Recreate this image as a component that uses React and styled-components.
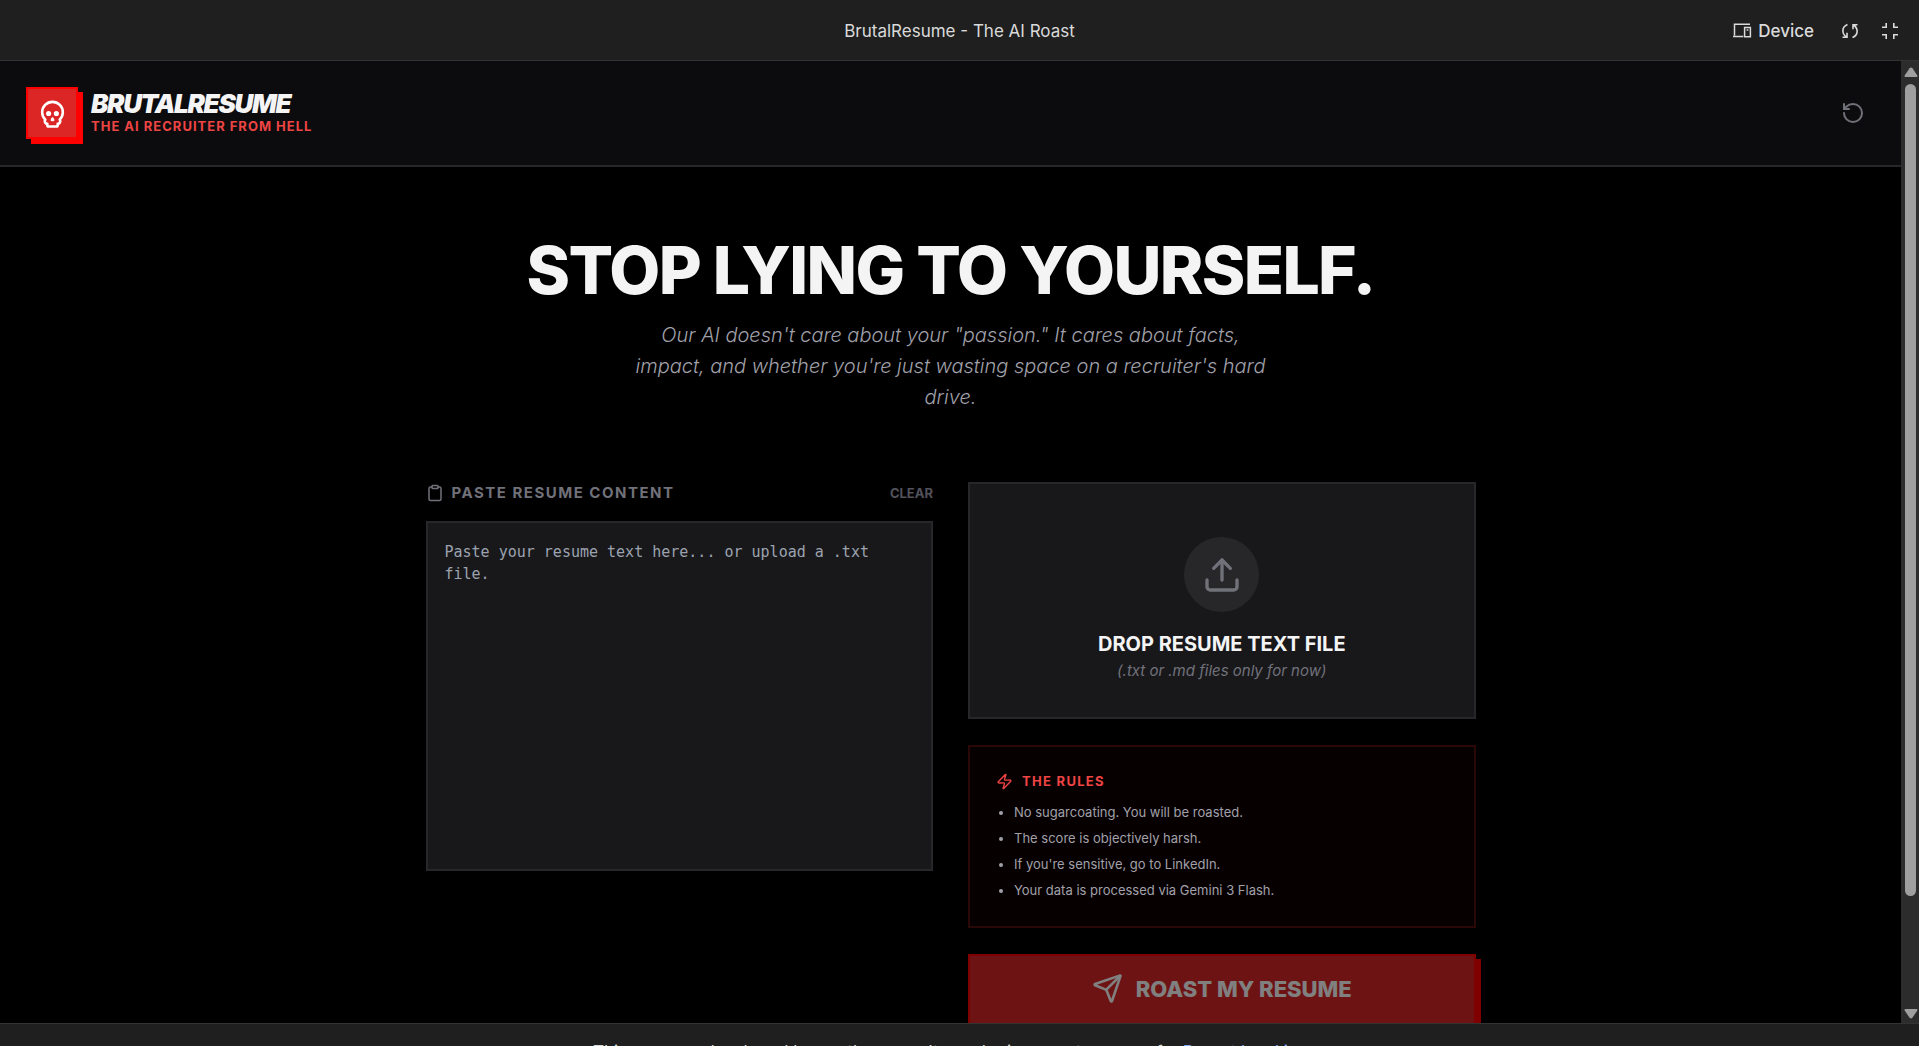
import React, { useState } from "react";
import styled, { createGlobalStyle } from "styled-components";
import { Clipboard, RotateCcw, Send, Skull, Upload, Zap } from "lucide-react";

const RULES = [
  "No sugarcoating. You will be roasted.",
  "The score is objectively harsh.",
  "If you're sensitive, go to LinkedIn.",
  "Your data is processed via Gemini 3 Flash.",
];

const DeviceIcon = () => (
  <svg width="20" height="20" viewBox="0 0 20 20" fill="none" stroke="currentColor" strokeWidth="1.5">
    <path d="M18 3.2H2.5V14.5M1 15.6H11.2M12.6 6.6H18.4V15.8H12.6ZM14.6 9H16.4" />
  </svg>
);

const SyncIcon = () => (
  <svg width="20" height="20" viewBox="0 0 20 20" fill="none" stroke="currentColor" strokeWidth="1.6">
    <path d="M7.5 3.5C1.5 6 1.5 12.5 6.5 16M2.5 16.2H7V11.8M12.5 16.5C18.5 14 18.5 7.5 13.5 4M17.5 3.8H13V8.2" />
  </svg>
);

const CollapseIcon = () => (
  <svg width="20" height="20" viewBox="0 0 20 20" fill="none" stroke="currentColor" strokeWidth="1.6">
    <path d="M2 6.2H6.2V2M13.8 2V6.2H18M2 13.8H6.2V18M18 13.8H13.8V18" />
  </svg>
);

const ScrollArrow = ({ down }) => (
  <svg width="14" height="10" viewBox="0 0 14 10" fill="#9f9f9f">
    {down ? (
      <path d="M1.5 0H12.5Q14 .3 13.2 1.7L8.4 8.8Q7 10.4 5.6 8.8L.8 1.7Q0 .3 1.5 0Z" />
    ) : (
      <path d="M1.5 10H12.5Q14 9.7 13.2 8.3L8.4 1.2Q7-.4 5.6 1.2L.8 8.3Q0 9.7 1.5 10Z" />
    )}
  </svg>
);

const App = () => {
  const [resume, setResume] = useState("");

  const handleFile = async (event) => {
    const file = event.target.files[0];
    if (file) {
      setResume(await file.text());
    }
  };

  return (
    <Shell>
      <GlobalStyle />
      <TopBar>
        <AppTitle>BrutalResume - The AI Roast</AppTitle>
        <TopActions>
          <DeviceButton type="button">
            <DeviceIcon />
            Device
          </DeviceButton>
          <IconButton type="button" aria-label="Reload">
            <SyncIcon />
          </IconButton>
          <IconButton type="button" aria-label="Exit full screen">
            <CollapseIcon />
          </IconButton>
        </TopActions>
      </TopBar>

      <Preview>
        <Page>
          <Header>
            <Brand>
              <Logo>
                <Skull size={31} />
              </Logo>
              <div>
                <BrandName>BRUTALRESUME</BrandName>
                <Tagline>THE AI RECRUITER FROM HELL</Tagline>
              </div>
            </Brand>
            <ResetButton type="button" aria-label="Start over" onClick={() => setResume("")}>
              <RotateCcw size={24} />
            </ResetButton>
          </Header>

          <Main>
            <Hero>
              <Headline>STOP LYING TO YOURSELF.</Headline>
              <Lead>
                Our AI doesn't care about your "passion." It cares about facts,
                impact, and whether you're just wasting space on a recruiter's
                hard drive.
              </Lead>
            </Hero>
            <Columns>
              <PasteColumn>
                <PasteHead>
                  <PasteLabel htmlFor="resume">
                    <Clipboard size={18} />
                    PASTE RESUME CONTENT
                  </PasteLabel>
                  <ClearButton type="button" onClick={() => setResume("")}>
                    CLEAR
                  </ClearButton>
                </PasteHead>
                <ResumeInput
                  id="resume"
                  value={resume}
                  onChange={(e) => setResume(e.target.value)}
                  placeholder="Paste your resume text here... or upload a .txt file."
                />
              </PasteColumn>
              <SideColumn>
                <DropZone>
                  <HiddenFile type="file" accept=".txt,.md" onChange={handleFile} />
                  <UploadCircle>
                    <Upload size={40} />
                  </UploadCircle>
                  <DropTitle>DROP RESUME TEXT FILE</DropTitle>
                  <DropHint>(.txt or .md files only for now)</DropHint>
                </DropZone>
                <Rules>
                  <RulesTitle>
                    <Zap size={17} />
                    THE RULES
                  </RulesTitle>
                  <RuleList>
                    {RULES.map((rule) => (
                      <li key={rule}>{rule}</li>
                    ))}
                  </RuleList>
                </Rules>
                <RoastButton type="button" disabled={!resume}>
                  <Send size={31} />
                  ROAST MY RESUME
                </RoastButton>
              </SideColumn>
            </Columns>
          </Main>
        </Page>
        <ScrollTrack>
          <ScrollArrow />
          <ScrollLane>
            <ScrollThumb />
          </ScrollLane>
          <ScrollArrow down />
        </ScrollTrack>
      </Preview>

      <Footer>
        <span>This app was developed by another user. It may be inaccurate or unsafe.</span>
        <FooterLink href="#report">Report legal issue</FooterLink>
      </Footer>
    </Shell>
  );
};

const GlobalStyle = createGlobalStyle`
  * {
    box-sizing: border-box;
  }
  body {
    margin: 0;
    overflow: hidden;
    background: #000;
    color: #f4f4f5;
    font-family: Inter, "Liberation Sans", sans-serif;
  }
  h1, h2, h3, p, ul {
    margin: 0;
  }
  button {
    padding: 0;
    border: 0;
    background: none;
    color: inherit;
    font-family: inherit;
    cursor: pointer;
  }
  svg {
    display: block;
    flex: none;
  }
`;

const Shell = styled.div`
  display: flex;
  flex-direction: column;
  height: 100vh;
`;

const TopBar = styled.div`
  display: grid;
  grid-template-columns: 1fr auto 1fr;
  align-items: center;
  flex: none;
  height: 61px;
  padding: 1px 19px 0;
  border-bottom: 1px solid #333;
  background: #1f1f1f;
  color: #dadada;
`;

const AppTitle = styled.div`
  grid-column: 2;
  font-size: 17px;
  line-height: 24px;
`;

const TopActions = styled.div`
  display: flex;
  align-items: center;
  justify-content: flex-end;
  gap: 20px;
`;

const DeviceButton = styled.button`
  display: flex;
  align-items: center;
  gap: 6px;
  margin-right: 6px;
  font-size: 17px;
  font-weight: 500;
  line-height: 24px;
`;

const IconButton = styled.button`
  display: flex;
`;

const Preview = styled.div`
  display: flex;
  flex: 1;
  min-height: 0;
`;

const Page = styled.div`
  flex: 1;
  min-width: 0;
  overflow: hidden;
  background: #000;
`;

const Header = styled.header`
  display: flex;
  align-items: center;
  justify-content: space-between;
  padding: 26px 36px 26px 26px;
  border-bottom: 2px solid #27272a;
  background: #0c0c0e;
`;

const Brand = styled.div`
  display: flex;
  align-items: center;
  gap: 13px;
`;

const Logo = styled.div`
  display: flex;
  align-items: center;
  justify-content: center;
  width: 52px;
  height: 52px;
  border: 2px solid #f00;
  background: #dc2626;
  box-shadow: 5px 5px 0 #f00;
  color: #fff;
`;

const BrandName = styled.h1`
  font-size: 26px;
  font-style: italic;
  font-weight: 900;
  letter-spacing: -0.05em;
  line-height: 26px;
`;

const Tagline = styled.p`
  color: #ef4444;
  font-size: 13px;
  font-weight: 700;
  letter-spacing: 1px;
  line-height: 18px;
`;

const ResetButton = styled.button`
  display: flex;
  color: #71717a;
`;

const Main = styled.main`
  max-width: 1050px;
  margin: 0 auto;
  padding-top: 70px;
`;

const Hero = styled.section`
  display: flex;
  flex-direction: column;
  align-items: center;
  gap: 17px;
  margin-bottom: 69px;
  text-align: center;
`;

const Headline = styled.h2`
  font-size: 66px;
  font-weight: 800;
  letter-spacing: -0.025em;
  line-height: 66px;
`;

const Lead = styled.p`
  max-width: 634px;
  color: #a1a1aa;
  font-size: 20px;
  font-style: oblique 10deg;
  font-weight: 300;
  line-height: 31px;
`;

const Columns = styled.div`
  display: grid;
  grid-template-columns: 1fr 1fr;
  gap: 35px;
`;

const PasteColumn = styled.section`
  display: flex;
  flex-direction: column;
  gap: 18px;
`;

const PasteHead = styled.div`
  display: flex;
  align-items: center;
  justify-content: space-between;
  height: 21px;
`;

const PasteLabel = styled.label`
  display: flex;
  align-items: center;
  gap: 8px;
  color: #71717a;
  font-size: 15px;
  font-weight: 700;
  letter-spacing: 0.1em;
`;

const ClearButton = styled.button`
  color: #52525b;
  font-size: 13px;
  font-weight: 700;
`;

const ResumeInput = styled.textarea`
  display: block;
  width: 100%;
  height: 350px;
  padding: 18px 17px;
  border: 2px solid #27272a;
  outline: none;
  background: #18181b;
  color: #f4f4f5;
  font-family: "DejaVu Sans Mono", "Liberation Mono", monospace;
  font-size: 15px;
  line-height: 22px;
  resize: none;

  &::placeholder {
    color: #9ca3af;
  }
`;

const SideColumn = styled.section`
  display: flex;
  flex-direction: column;
  gap: 26px;
`;

const DropZone = styled.label`
  display: flex;
  flex-direction: column;
  align-items: center;
  padding: 53px 35px 35px;
  border: 2px solid #27272a;
  background: #18181b;
  cursor: pointer;
`;

const HiddenFile = styled.input`
  display: none;
`;

const UploadCircle = styled.span`
  display: flex;
  align-items: center;
  justify-content: center;
  width: 75px;
  height: 75px;
  margin-bottom: 17px;
  border-radius: 50%;
  background: #27272a;
  color: #71717a;
`;

const DropTitle = styled.span`
  font-size: 20px;
  font-weight: 700;
  line-height: 31px;
`;

const DropHint = styled.span`
  color: #71717a;
  font-size: 15px;
  font-style: italic;
  line-height: 22px;
`;

const Rules = styled.section`
  padding: 25px 26px 27px;
  border: 2px solid #2b0808;
  background: #070000;
`;

const RulesTitle = styled.h3`
  display: flex;
  align-items: center;
  gap: 9px;
  margin-bottom: 13px;
  color: #ef4444;
  font-size: 13px;
  font-weight: 700;
  letter-spacing: 0.1em;
  line-height: 18px;
`;

const RuleList = styled.ul`
  display: grid;
  gap: 8px;
  padding-left: 18px;
  color: #a1a1aa;
  font-size: 13px;
  line-height: 18px;
`;

const RoastButton = styled.button`
  display: flex;
  align-items: center;
  justify-content: center;
  gap: 13px;
  padding: 17px 18px 19px;
  border: 2px solid #f00;
  background: #dc2626;
  box-shadow: 5px 5px 0 #f00;
  color: #fff;
  font-size: 22px;
  font-weight: 800;
  line-height: 30px;

  &:disabled {
    opacity: 0.5;
    cursor: not-allowed;
  }
`;

const ScrollTrack = styled.div`
  display: flex;
  flex-direction: column;
  align-items: center;
  flex: none;
  gap: 7px;
  width: 18px;
  padding: 6px 0 4px 1px;
  background: #2c2c2c;
`;

const ScrollLane = styled.div`
  flex: 1;
  width: 11px;
`;

const ScrollThumb = styled.div`
  height: 88.4%;
  border-radius: 6px;
  background: #9f9f9f;
`;

const Footer = styled.footer`
  display: flex;
  justify-content: center;
  flex: none;
  gap: 6px;
  height: 23px;
  padding-top: 16px;
  border-top: 1px solid #333;
  background: #1f1f1f;
  color: #dadada;
  font-size: 17px;
  line-height: 24px;
  overflow: hidden;
`;

const FooterLink = styled.a`
  color: #87a9ff;
  text-decoration: none;
`;

export default App;
